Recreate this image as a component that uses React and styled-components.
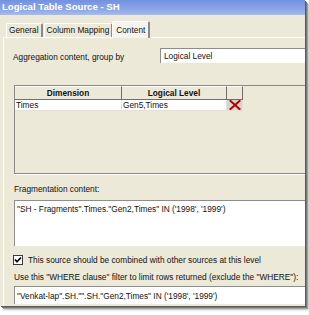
import React from 'react';
import styled, { createGlobalStyle } from 'styled-components';

const Global = createGlobalStyle`
  html, body { margin: 0; padding: 0; background: #fff; }
  body { font-family: "Liberation Sans", Arial, sans-serif; color: #111; }
`;

const Screen = styled.div`
  width: 309px;
  height: 315px;
  background: #fff;
  overflow: hidden;
`;

const Dialog = styled.div`
  width: 305px;
  height: 306px;
  background: #ece9d8;
  overflow: hidden;
  display: flex;
  flex-direction: column;
  box-shadow: 1px 1px 0 #5a5a5a, 2px 2px 0 #7a7a7a, 3px 3px 1px #a0a0a0, 4px 4px 2px #c8c8c8;
`;

const TitleBar = styled.div`
  height: 15px;
  flex: none;
  padding-left: 2px;
  background: linear-gradient(#7391e1, #8aa5e8 60%, #a6bcee);
  color: #fff;
  font-weight: bold;
  font-size: 9.6px;
  line-height: 14px;
  white-space: nowrap;
`;

const Body = styled.div`
  flex: 1;
  display: flex;
  flex-direction: column;
  padding: 7px 0 0 3px;
`;

const TabRow = styled.div`
  display: flex;
  align-items: flex-end;
  height: 15px;
  padding-left: 2px;
  position: relative;
  z-index: 1;
`;

const Tab = styled.div`
  height: ${p => (p.$active ? '16px' : '13px')};
  margin-bottom: ${p => (p.$active ? '-1px' : '0')};
  margin-left: ${p => (p.$active ? '-1px' : '1px')};
  padding: 0 ${p => (p.$active ? '3px' : '2px')};
  background: ${p => (p.$active ? '#f5f4ee' : '#ece9d8')};
  border-top: 1px solid #fff;
  border-left: 1px solid #fff;
  border-right: 2px solid #8a8a8a;
  border-top-left-radius: 2px;
  border-top-right-radius: 2px;
  font-size: 8.3px;
  line-height: ${p => (p.$active ? '16px' : '13px')};
  white-space: nowrap;
`;

const Panel = styled.div`
  flex: 1;
  border-top: 1px solid #fff;
  border-left: 1px solid #fff;
  padding-left: 10px;
  display: flex;
  flex-direction: column;
  font-size: 8.3px;
`;

const GroupRow = styled.div`
  display: flex;
  align-items: center;
  margin-top: 10px;
  height: 15px;
`;

const GroupLabel = styled.div`
  width: 147px;
  flex: none;
  margin-left: -1px;
  padding-top: 2px;
  white-space: nowrap;
`;

const SelectBox = styled.div`
  flex: none;
  width: 170px;
  height: 15px;
  box-sizing: border-box;
  background: #fff;
  border-top: 1px solid #8d8d8d;
  border-left: 1px solid #8d8d8d;
  padding-left: 3px;
  line-height: 14px;
  white-space: nowrap;
`;

const Grid = styled.div`
  margin-top: 22px;
  height: 89px;
  width: 300px;
  flex: none;
  box-sizing: border-box;
  border: 1px solid #8a8a84;
  box-shadow: 0 1px 0 #fff;
`;

const GridRow = styled.div`
  display: grid;
  grid-template-columns: 107px 105px 16px;
  height: ${p => (p.$head ? '14px' : '11px')};
`;

const HeadCell = styled.div`
  box-sizing: border-box;
  border-top: 1px solid #fff;
  border-right: 1px solid #6f6f6a;
  border-bottom: 1px solid #6f6f6a;
  font-weight: bold;
  text-align: center;
  line-height: 12px;
  white-space: nowrap;
`;

const Cell = styled.div`
  box-sizing: border-box;
  background: ${p => (p.$tool ? '#d8d5cc' : '#fff')};
  border-right: 1px solid #e2e0d8;
  border-bottom: 1px solid #e2e0d8;
  padding-left: 1px;
  line-height: 10px;
  white-space: nowrap;
  overflow: hidden;
  display: flex;
  align-items: center;
  justify-content: ${p => (p.$tool ? 'center' : 'flex-start')};
`;

const FieldLabel = styled.div`
  margin-top: ${p => p.$top}px;
  height: 10px;
  line-height: 10px;
  white-space: nowrap;
`;

const TextArea = styled.div`
  margin-top: ${p => p.$top}px;
  height: ${p => p.$h}px;
  width: 300px;
  flex: none;
  box-sizing: border-box;
  background: #fff;
  border-top: 1px solid #8d8d8d;
  border-left: 1px solid #8d8d8d;
  padding: ${p => p.$pad}px 0 0 2px;
  line-height: 10px;
  white-space: nowrap;
`;

const CheckRow = styled.div`
  margin-top: 9px;
  height: 10px;
  display: flex;
  align-items: center;
  gap: 5px;
  margin-left: -1px;
  white-space: nowrap;
`;

const CheckBox = styled.div`
  width: 10px;
  height: 10px;
  flex: none;
  box-sizing: border-box;
  border: 1px solid #3c3c3c;
  background: #fff;
  display: flex;
  align-items: center;
  justify-content: center;
`;

const DeleteIcon = () => (
  <svg width="12" height="10" viewBox="0 0 12 10">
    <path d="M1.5 1 L10.5 9 M10.5 1 L1.5 9" stroke="#b40000" strokeWidth="2" strokeLinecap="square" />
  </svg>
);

const CheckMark = () => (
  <svg width="8" height="8" viewBox="0 0 8 8">
    <path d="M1 3.5 L3 5.8 L7 1.5" stroke="#000" strokeWidth="1.7" fill="none" />
  </svg>
);

export default function App() {
  return (
    <Screen>
      <Global />
      <Dialog>
        <TitleBar>Logical Table Source - SH</TitleBar>
        <Body>
          <TabRow>
            <Tab>General</Tab>
            <Tab>Column Mapping</Tab>
            <Tab $active>Content</Tab>
          </TabRow>
          <Panel>
            <GroupRow>
              <GroupLabel>Aggregation content, group by</GroupLabel>
              <SelectBox>Logical Level</SelectBox>
            </GroupRow>
            <Grid>
              <GridRow $head>
                <HeadCell>Dimension</HeadCell>
                <HeadCell>Logical Level</HeadCell>
                <HeadCell />
              </GridRow>
              <GridRow>
                <Cell>Times</Cell>
                <Cell>Gen5,Times</Cell>
                <Cell $tool><DeleteIcon /></Cell>
              </GridRow>
            </Grid>
            <FieldLabel $top={10}>Fragmentation content:</FieldLabel>
            <TextArea $top={6} $h={46} $pad={3}>
              "SH - Fragments".Times."Gen2,Times" IN ('1998', '1999')
            </TextArea>
            <CheckRow>
              <CheckBox><CheckMark /></CheckBox>
              <span>This source should be combined with other sources at this level</span>
            </CheckRow>
            <FieldLabel $top={7}>Use this "WHERE clause" filter to limit rows returned (exclude the "WHERE"):</FieldLabel>
            <TextArea $top={4} $h={18} $pad={4}>
              "Venkat-lap".SH."".SH."Gen2,Times" IN ('1998', '1999')
            </TextArea>
          </Panel>
        </Body>
      </Dialog>
    </Screen>
  );
}
